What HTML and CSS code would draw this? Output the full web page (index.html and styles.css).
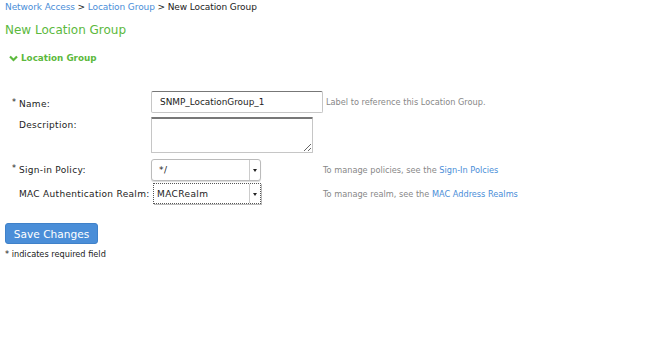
FILE: index.html
```html
<!DOCTYPE html>
<html lang="en">
<head>
  <meta charset="UTF-8">
  <title>New Location Group</title>
  <link rel="stylesheet" href="styles.css">
</head>
<body>
  <div class="breadcrumb">
    <a href="#">Network Access</a> &gt; <a href="#">Location Group</a> &gt; New Location Group
  </div>
  <h1>New Location Group</h1>

  <div class="section-title">
    <svg class="chev" width="9" height="7" viewBox="0 0 9 7"><path d="M1 1.5 L4.5 5 L8 1.5" fill="none" stroke="#5cb93d" stroke-width="2.2"/></svg>Location Group
  </div>

  <div class="form">
    <div class="label row1"><span class="req">*</span>Name:</div>
    <div class="field"><input class="text" type="text" value="SNMP_LocationGroup_1"></div>
    <div class="hint">Label to reference this Location Group.</div>

    <div class="label row2">Description:</div>
    <div class="field row2"><textarea class="desc"></textarea></div>
    <div class="hint row2"></div>

    <div class="label row3"><span class="req">*</span>Sign-in Policy:</div>
    <div class="field row3"><div class="select"><span>*/</span><span class="arrow"></span></div></div>
    <div class="hint row3">To manage policies, see the <a href="#">Sign-In Polcies</a></div>

    <div class="label row4">MAC Authentication Realm:</div>
    <div class="field row4"><div class="select focused"><span>MACRealm</span><span class="arrow"></span></div></div>
    <div class="hint row4">To manage realm, see the <a href="#">MAC Address Realms</a></div>
  </div>

  <button class="save">Save Changes</button>
  <div class="note">* indicates required field</div>
</body>
</html>
```

FILE: styles.css
```css
body {
  margin: 0;
  padding: 0 5px;
  font-family: "DejaVu Sans", Verdana, sans-serif;
  font-size: 9px;
  color: #222;
  background: #fff;
}
a {
  color: #4a8ed8;
  text-decoration: none;
}
.breadcrumb {
  padding-top: 2px;
  line-height: 11px;
  letter-spacing: -0.1px;
}
h1 {
  margin: 10px 0 0;
  font-size: 12px;
  font-weight: normal;
  color: #5cb93d;
  line-height: 14px;
}
.section-title {
  margin: 15px 0 0 4px;
  font-size: 8.8px;
  font-weight: bold;
  color: #5cb93d;
  line-height: 12px;
  display: flex;
  align-items: center;
}
.chev {
  margin-right: 3px;
}
.form {
  display: grid;
  grid-template-columns: 136px 172px auto;
  column-gap: 3px;
  margin: 27px 0 0 7px;
  align-items: start;
}
.label {
  line-height: 20px;
  margin-top: 2px;
  padding-left: 7px;
  position: relative;
  white-space: nowrap;
  letter-spacing: 0.3px;
}
.label.row1 {
  margin-top: 2px;
  line-height: 18px;
  padding-top: 2px;
}
.req {
  position: absolute;
  left: 0;
  top: -1px;
  font-size: 8px;
}
.row1 .req {
  top: 1px;
}
.hint {
  color: #888;
  font-size: 8.2px;
  line-height: 22px;
}
.row2 {
  margin-top: 4px;
}
.label.row2 {
  line-height: 12px;
  margin-top: 6px;
}
.row3 {
  margin-top: 6px;
}
.label.row3 {
  margin-top: 7px;
}
.row4 {
  margin-top: 2px;
}
.label.row4 {
  margin-top: 3px;
}
.hint.row3, .hint.row4 {
  margin-left: -3px;
}
.text {
  box-sizing: border-box;
  width: 172px;
  height: 22px;
  border: 1px solid #c6c6c6;
  border-top-color: #777;
  border-radius: 2px;
  padding: 0 8px;
  font-family: inherit;
  font-size: 8.9px;
  line-height: 20px;
  color: #222;
  margin: 0;
}
.desc {
  box-sizing: border-box;
  display: block;
  width: 162px;
  height: 36px;
  border: 1px solid #c6c6c6;
  border-top: 2px solid #777;
  border-radius: 1px;
  margin: 0;
  resize: both;
}
.select {
  box-sizing: border-box;
  width: 110px;
  height: 22px;
  display: flex;
  align-items: center;
  border: 1px solid #bbb;
  border-radius: 3px;
  background: #fff;
  box-shadow: 0 1px 1px rgba(0,0,0,0.15);
  font-size: 9px;
}
.select span:first-child {
  flex: 1;
  padding-left: 7px;
  letter-spacing: 0.4px;
}
.select .arrow {
  width: 10px;
  align-self: stretch;
  border-left: 1px solid #ccc;
  position: relative;
}
.select .arrow::after {
  content: "";
  position: absolute;
  left: 3px;
  top: 9px;
  border-left: 2px solid transparent;
  border-right: 2px solid transparent;
  border-top: 3px solid #222;
}
.select.focused {
  margin-left: 2px;
  width: 108px;
  height: 21px;
  border: 1px dotted #555;
  border-radius: 0;
  box-shadow: 1px 1px 0 #bbb;
}
.select.focused span:first-child {
  padding-left: 3px;
}
.save {
  display: block;
  margin-top: 18px;
  background: #4a8ed8;
  color: #fff;
  border: 1px solid #3f81c9;
  border-radius: 3px;
  font-family: inherit;
  font-size: 10.6px;
  width: 93px;
  height: 21px;
  padding: 0;
  cursor: pointer;
}
.note {
  margin-top: 5px;
  font-size: 8.2px;
}
```
